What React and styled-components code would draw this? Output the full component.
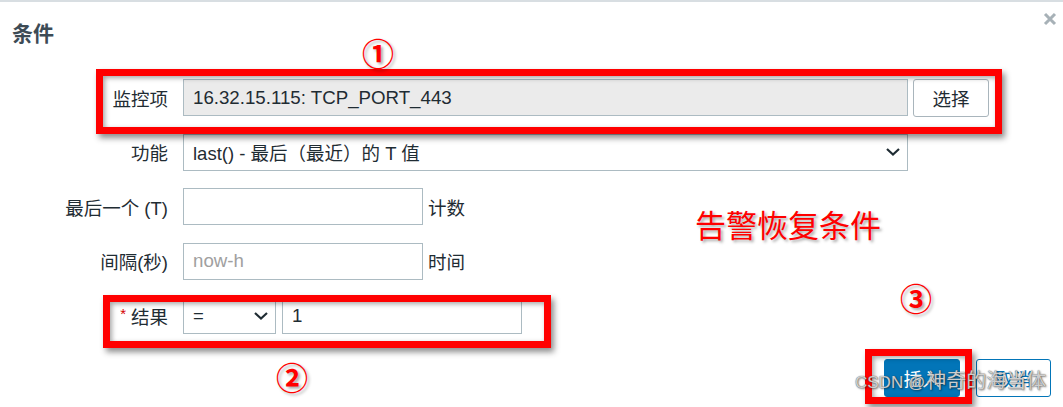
import React from "react";
import styled, { createGlobalStyle } from "styled-components";

const Global = createGlobalStyle`
  html, body { margin: 0; padding: 0; background: #fff; }
  body { font-family: "Liberation Sans", "Noto Sans CJK SC", sans-serif; }
  * { box-sizing: border-box; }
`;

const FONT = `"Liberation Sans", "Noto Sans CJK SC", sans-serif`;

const Page = styled.div`
  position: relative;
  width: 1063px;
  height: 407px;
  overflow: hidden;
  border-top: 2px solid #d8dee2;
  color: #1f2c33;
  font-family: ${FONT};
`;

const Header = styled.div`
  display: flex;
  justify-content: space-between;
  align-items: flex-start;
  padding: 19px 6px 0 12px;
`;

const Title = styled.h3`
  margin: 0;
  font-size: 21px;
  line-height: 26px;
  font-weight: 700;
  color: #3d4b55;
`;

const Close = styled.button`
  border: 0;
  background: none;
  padding: 0;
  margin-top: -9px;
  width: 14px;
  height: 14px;
  display: flex;
`;

const Form = styled.div`
  display: grid;
  grid-template-columns: 168px auto;
  column-gap: 15px;
  row-gap: 17.5px;
  margin-top: 32px;
`;

const Label = styled.label`
  height: 37px;
  display: flex;
  align-items: center;
  justify-content: flex-end;
  font-size: 18.5px;
  color: #1f2c33;
  white-space: nowrap;
`;

const Star = styled.span`
  color: #d40000;
  font-size: 15px;
  margin-right: 5px;
  align-self: flex-start;
  margin-top: 8px;
`;

const Control = styled.div`
  display: flex;
  align-items: center;
  gap: ${(p) => p.$gap || 5}px;
  height: 37px;
`;

const Field = styled.input`
  height: 37px;
  width: ${(p) => p.$w}px;
  border: 1px solid #acbbc2;
  background: ${(p) => (p.readOnly ? "#ebebeb" : "#fff")};
  padding: 0 9px;
  font-family: ${FONT};
  font-size: 18.7px;
  color: #1f2c33;
  outline: none;
  &::placeholder { color: #a0a0a0; }
`;

const Select = styled.div`
  height: 37px;
  width: ${(p) => p.$w}px;
  border: 1px solid #acbbc2;
  background: #fff;
  padding: 0 7px 0 9px;
  display: flex;
  align-items: center;
  justify-content: space-between;
  font-size: 18.5px;
  color: #1f2c33;
`;

const Suffix = styled.span`
  font-size: 18.5px;
  color: #1f2c33;
`;

const Btn = styled.button`
  height: 38px;
  width: ${(p) => p.$w}px;
  border-radius: 3px;
  font-family: ${FONT};
  font-size: 18.5px;
  cursor: pointer;
  border: 1px solid ${(p) => (p.$variant ? "#0275b8" : "#a9b5bc")};
  background: ${(p) => (p.$variant === "primary" ? "#0275b8" : "#fff")};
  color: ${(p) => (p.$variant === "primary" ? "#fff" : p.$variant === "alt" ? "#0275b8" : "#1f2c33")};
`;

const Footer = styled.div`
  display: flex;
  justify-content: flex-end;
  gap: 16px;
  padding-right: 12px;
  margin-top: 25px;
`;

const RedBox = styled.div`
  position: absolute;
  left: ${(p) => p.$x}px;
  top: ${(p) => p.$y}px;
  width: ${(p) => p.$w}px;
  height: ${(p) => p.$h}px;
  border: 7px solid #ff0000;
  box-shadow: 3px 4px 6px rgba(0, 0, 0, 0.45), inset 2px 2px 5px rgba(0, 0, 0, 0.35);
  pointer-events: none;
`;

const Mark = styled.div`
  position: absolute;
  left: ${(p) => p.$x}px;
  top: ${(p) => p.$y}px;
  color: #ff0000;
  font-family: "Noto Sans CJK SC", sans-serif;
  font-size: ${(p) => p.$size || 32}px;
  font-weight: ${(p) => p.$weight || 400};
  line-height: 1;
  text-shadow: 2px 2px 3px rgba(0, 0, 0, 0.35);
  white-space: nowrap;
`;

const Watermark = styled.div`
  position: absolute;
  left: 855px;
  top: 369px;
  font-family: ${FONT};
  font-size: 20px;
  line-height: 1;
  color: rgba(230, 230, 230, 0.85);
  text-shadow: 0 0 1px #444, 1px 1px 2px rgba(0, 0, 0, 0.5);
  white-space: nowrap;
  pointer-events: none;
`;

const WmLatin = styled.span`
  font-size: 17px;
  margin-right: 1px;
`;

const Chevron = () => (
  <svg width="14" height="8" viewBox="0 0 14 8">
    <polyline points="1,1 7,6.5 13,1" fill="none" stroke="#1f2c33" strokeWidth="2.2" />
  </svg>
);

export default function App() {
  return (
    <>
      <Global />
      <Page>
        <Header>
          <Title>条件</Title>
          <Close aria-label="close">
            <svg width="14" height="14" viewBox="0 0 14 14">
              <path d="M2 2 L12 12 M12 2 L2 12" stroke="#a7b1b7" strokeWidth="3" />
            </svg>
          </Close>
        </Header>

        <Form>
          <Label>监控项</Label>
          <Control>
            <Field $w={725} readOnly value="16.32.15.115: TCP_PORT_443" />
            <Btn $w={76}>选择</Btn>
          </Control>

          <Label>功能</Label>
          <Control>
            <Select $w={725}>
              <span>last() - 最后（最近）的 T 值</span>
              <Chevron />
            </Select>
          </Control>

          <Label>最后一个 (T)</Label>
          <Control>
            <Field $w={240} defaultValue="" />
            <Suffix>计数</Suffix>
          </Control>

          <Label>间隔(秒)</Label>
          <Control>
            <Field $w={240} placeholder="now-h" />
            <Suffix>时间</Suffix>
          </Control>

          <Label>
            <Star>*</Star>结果
          </Label>
          <Control $gap={6}>
            <Select $w={93}>
              <span>=</span>
              <Chevron />
            </Select>
            <Field $w={240} defaultValue="1" />
          </Control>
        </Form>

        <Footer>
          <Btn $w={76} $variant="primary">插入</Btn>
          <Btn $w={75} $variant="alt">取消</Btn>
        </Footer>

        <RedBox $x={96} $y={67} $w={906} $h={65} />
        <RedBox $x={103} $y={293} $w={448} $h={53} />
        <RedBox $x={865} $y={347} $w={107} $h={55} />

        <Mark $x={362} $y={34} $weight={700}>①</Mark>
        <Mark $x={276} $y={358} $weight={700}>②</Mark>
        <Mark $x={900} $y={279} $weight={700}>③</Mark>
        <Mark $x={695} $y={206} $size={31}>告警恢复条件</Mark>

        <Watermark>
          <WmLatin>CSDN @</WmLatin>神奇的海当体
        </Watermark>
      </Page>
    </>
  );
}
